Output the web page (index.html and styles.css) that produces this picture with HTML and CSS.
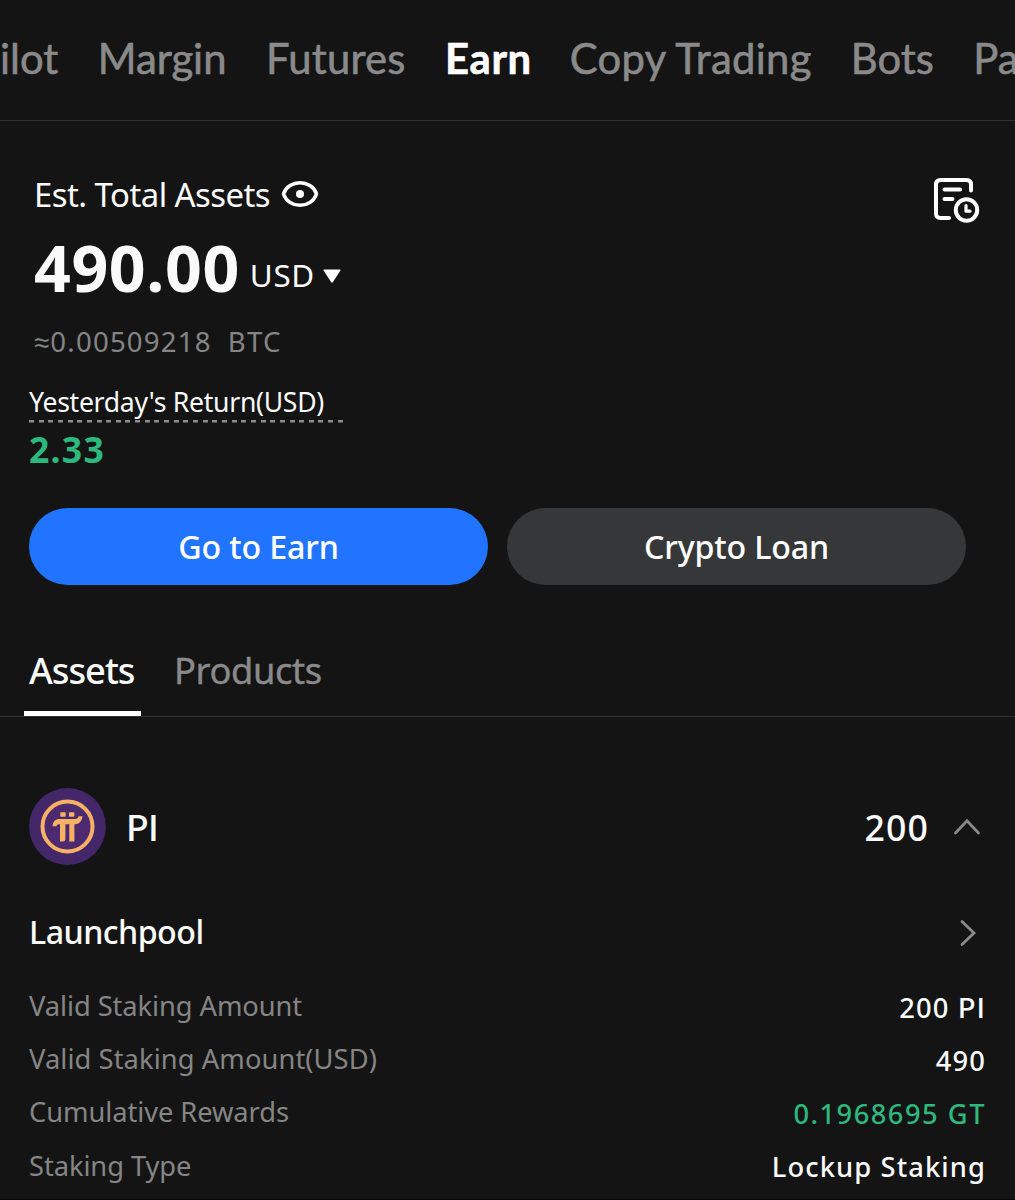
FILE: index.html
```
<!DOCTYPE html>
<html lang="en">
<head>
  <meta charset="UTF-8">
  <meta name="viewport" content="width=device-width, initial-scale=1.0">
  <title>Earn</title>
  <link rel="stylesheet" href="styles.css">
</head>
<body>
  <!-- Account Tabs -->
  <nav class="top-nav">
    <a>ilot</a>
    <a>Margin</a>
    <a class="futures">Futures</a>
    <a class="active">Earn</a>
    <a class="copy">Copy Trading</a>
    <a>Bots</a>
    <a>Pa</a>
  </nav>

  <!-- Balance -->
  <section class="summary">
    <div class="summary-head">
      <div class="est">
        <span>Est. Total Assets</span>
        <svg class="eye" width="38" height="28" viewBox="0 0 38 28" fill="none">
          <path d="M2.500 14C5 6.500 12 2.800 19 2.800S33 6.500 35.500 14C33 21.500 26 25.200 19 25.200S5 21.500 2.500 14Z" stroke="#fff" stroke-width="3.600" stroke-linejoin="round"/>
          <circle cx="19" cy="14" r="4" fill="#fff"/>
        </svg>
      </div>
      <svg class="history" width="48" height="48" viewBox="0 0 48 48" fill="none" stroke="#fff" stroke-width="4" stroke-linecap="round" stroke-linejoin="round">
        <path d="M39 14.500V8.500Q39 4 34.500 4H8.500Q4 4 4 8.500V37.500Q4 42 8.500 42H17"/>
        <path d="M12.500 13.500H28M12.500 23H20.500"/>
        <circle cx="34.500" cy="34" r="10.700"/>
        <path d="M34 29.500V35.200H38" stroke-width="3.200"/>
      </svg>
    </div>
    <div class="total">
      <span class="amount">490.00</span>
      <span class="currency">USD</span>
      <svg class="caret" width="18" height="14" viewBox="0 0 18 14"><path d="M1 .5H17Q18 .5 17.400 1.500L9.800 13.300Q9 14.200 8.200 13.300L.6 1.500Q0 .5 1 .5Z" fill="#fff"/></svg>
    </div>
    <div class="btc"><span>≈0.00509218</span><span class="unit">BTC</span></div>
    <div class="return-label">Yesterday's Return(USD)</div>
    <div class="return-value">2.33</div>
    <div class="actions">
      <button class="primary">Go to Earn</button>
      <button class="secondary">Crypto Loan</button>
    </div>
  </section>

  <nav class="sub-nav">
    <a class="active">Assets</a>
    <a class="products">Products</a>
  </nav>

  <!-- PI position -->
  <section class="position">
    <div class="coin">
      <svg class="coin-icon" width="77" height="77" viewBox="0 0 77 77">
        <circle cx="38.500" cy="38.500" r="38.400" fill="#432769"/>
        <circle cx="38.500" cy="38.500" r="25" fill="#4d2a70" stroke="#f6b164" stroke-width="4"/>
        <g fill="#f6b164">
          <rect x="31.300" y="24.300" width="5.400" height="4.500" rx=".8"/>
          <rect x="40" y="24.300" width="5.400" height="4.500" rx=".8"/>
          <path d="M23.500 38.200C24 33.500 26.500 31 30.500 31H46C48.300 31 49 30.300 49.500 28.300H53.500C53 33.500 50 36.200 46 36.200H45.400V53.500H40.300V36.200H36.400V51C36.400 52.500 35.500 53.500 34 53.500H31V36.200H30C28.500 36.200 27.800 37 27.500 38.200Z"/>
        </g>
      </svg>
      <span class="coin-name">PI</span>
      <span class="coin-amount">200</span>
      <svg class="up" width="28" height="18" viewBox="0 0 28 18" fill="none"><path d="M2.500 15L14 2.700L25.500 15" stroke="#8a8a8a" stroke-width="2.800" stroke-linecap="round"/></svg>
    </div>
    <div class="product">
      <span>Launchpool</span>
      <svg width="18" height="28" viewBox="0 0 18 28" fill="none"><path d="M3 2.500L15 14L3 25.500" stroke="#8a8a8a" stroke-width="2.800" stroke-linecap="round"/></svg>
    </div>
    <dl class="details">
      <div><dt>Valid Staking Amount</dt><dd>200 <span class="symbol">PI</span></dd></div>
      <div><dt class="usd">Valid Staking Amount(USD)</dt><dd>490</dd></div>
      <div><dt>Cumulative Rewards</dt><dd class="green">0.1968695 GT</dd></div>
      <div><dt>Staking Type</dt><dd>Lockup Staking</dd></div>
    </dl>
  </section>
</body>
</html>
```
FILE: styles.css
```
* {
  box-sizing: border-box;
}

body {
  margin: 0;
  height: 1200px;
  overflow: hidden;
  background-color: #141414;
  border-bottom: 1px solid #0a050a;
  color: #fafafa;
  font-family: "Noto Sans", sans-serif;
  white-space: nowrap;
}

svg {
  display: block;
  flex: none;
}

.top-nav {
  display: flex;
  height: 121px;
  border-bottom: 1px solid #303030;
  overflow: hidden;
  color: #8a8a8a;
  font-family: Lato, sans-serif;
  font-size: 41.8px;
  line-height: 116px;
  -webkit-text-stroke: 0.6px;
}

.top-nav a {
  flex: none;
  margin-right: 39.5px;
}

.top-nav .active {
  margin-right: 38px;
  color: #fff;
  font-weight: 700;
  letter-spacing: 0.6px;
}

.top-nav .futures {
  letter-spacing: 0.2px;
}

.top-nav .copy {
  margin-right: 39px;
  letter-spacing: 0.3px;
}

.summary {
  padding: 50px 49px 0 29px;
}

.summary-head {
  display: flex;
  justify-content: space-between;
  height: 58px;
  margin-right: -14px;
  padding-left: 5px;
}

.est {
  display: flex;
  gap: 11px;
  font-size: 32.9px;
  line-height: 47px;
  letter-spacing: -0.54px;
}

.eye {
  margin-top: 9px;
}

.history {
  margin-top: 5px;
}

.total {
  display: flex;
  align-items: center;
  height: 76px;
  padding-left: 5px;
}

.amount {
  font-size: 64.4px;
  font-weight: 700;
  line-height: 76px;
  letter-spacing: 0.6px;
}

.currency {
  margin: 15px 0 0 10px;
  font-size: 31.4px;
  line-height: 40px;
  letter-spacing: 0.6px;
}

.caret {
  margin: 17px 0 0 8px;
}

.btc {
  display: flex;
  margin-top: 16px;
  padding-left: 5px;
  color: #858585;
  font-size: 27.6px;
  line-height: 41px;
  letter-spacing: 1.2px;
}

.unit {
  margin-left: 16px;
}

.return-label {
  width: 314px;
  height: 40px;
  margin-top: 21px;
  font-size: 26.6px;
  line-height: 38px;
  letter-spacing: -0.29px;
  background: repeating-linear-gradient(90deg, #8c8c8c 0 5px, transparent 5px 9.65px) 0 37px / 100% 2.5px no-repeat;
}

.return-value {
  margin-top: 3px;
  color: #2db87e;
  font-size: 35.6px;
  font-weight: 700;
  line-height: 46px;
  letter-spacing: 1.24px;
}

.actions {
  display: flex;
  gap: 19px;
  margin-top: 36px;
}

.actions button {
  flex: 1;
  height: 77px;
  padding: 0 0 1px;
  border: none;
  border-radius: 39px;
  color: #fff;
  font-family: inherit;
  font-size: 32.2px;
  font-weight: 500;
  letter-spacing: -0.16px;
}

.primary {
  background-color: #2174ff;
}

.secondary {
  background-color: #363739;
}

.sub-nav {
  display: flex;
  height: 72px;
  margin-top: 60px;
  padding-left: 24px;
  border-bottom: 1px solid #303030;
  font-size: 36.3px;
  line-height: 50px;
}

.sub-nav a {
  height: 71px;
  padding: 0 5px;
}

.sub-nav .active {
  width: 117px;
  font-weight: 500;
  letter-spacing: -1px;
  border-bottom: 5px solid #fff;
}

.sub-nav .products {
  margin-left: 28px;
  color: #8a8a8a;
  letter-spacing: -0.4px;
  -webkit-text-stroke: 0.4px;
}

.position {
  padding: 71px 29px 0;
}

.coin {
  display: flex;
  align-items: center;
  height: 77px;
}

.coin-name {
  margin: -2px 0 0 20px;
  font-family: "Noto Sans CJK SC", sans-serif;
  font-size: 34.8px;
  font-weight: 500;
  line-height: 50px;
  letter-spacing: -0.5px;
}

.coin-amount {
  margin-left: auto;
  font-size: 35.7px;
  font-weight: 500;
  line-height: 50px;
  letter-spacing: 1.1px;
}

.up {
  margin: 0 5px 0 24px;
}

.product {
  display: flex;
  align-items: center;
  justify-content: space-between;
  height: 50px;
  margin-top: 42px;
  padding-right: 9px;
  font-size: 32.2px;
  font-weight: 500;
  line-height: 50px;
  letter-spacing: -0.54px;
}

.product svg {
  margin-top: 1px;
}

.details {
  margin: 22px 0 0;
  font-size: 27.3px;
}

.details div {
  display: flex;
  justify-content: space-between;
  height: 53.2px;
  line-height: 53px;
}

.details dt {
  color: #858585;
  letter-spacing: -0.08px;
}

.details .usd {
  letter-spacing: 0.08px;
}

.details dd {
  margin: 1.5px 0 0;
  font-weight: 500;
  letter-spacing: 1.1px;
}

.details .green {
  color: #2db87e;
  letter-spacing: 1.5px;
}

.details .symbol {
  font-family: "Noto Sans CJK SC", sans-serif;
  line-height: 1;
}
```
